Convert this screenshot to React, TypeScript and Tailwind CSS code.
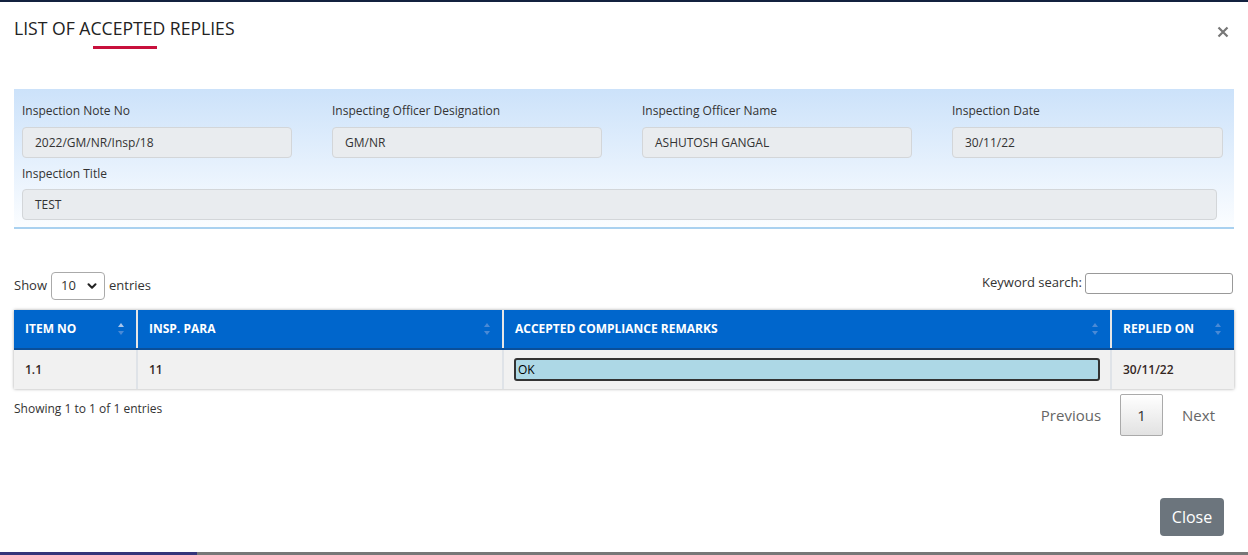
import { ChevronDown } from 'lucide-react';

const fields = [
  { label: 'Inspection Note No', value: '2022/GM/NR/Insp/18' },
  { label: 'Inspecting Officer Designation', value: 'GM/NR' },
  { label: 'Inspecting Officer Name', value: 'ASHUTOSH GANGAL' },
  { label: 'Inspection Date', value: '30/11/22' },
];

function SortIcon({ active }: { active?: boolean }) {
  return (
    <svg width="8" height="14" viewBox="0 0 8 14" className="shrink-0">
      <path d="M4 1 L7 5 L1 5 Z" fill={active ? '#a9c6ec' : '#4a8ad6'} />
      <path d="M4 13 L7 9 L1 9 Z" fill="#4a8ad6" />
    </svg>
  );
}

export default function App() {
  return (
    <div
      className="relative h-[555px] w-[1248px] overflow-hidden border-t-2 border-[#13213f] bg-white text-[#333]"
      style={{ fontFamily: '"Open Sans", "Noto Sans", sans-serif' }}
    >
      <div className="flex items-start justify-between px-[14px] pt-[14px]">
        <div className="flex flex-col">
          <h1 className="text-[17.6px] leading-[24px] text-[#222]">LIST OF ACCEPTED REPLIES</h1>
          <div className="ml-[79px] mt-[6px] h-[3px] w-[64px] bg-[#c8103c]" />
        </div>
        <button className="mr-[5px] mt-[10px]">
          <svg width="12" height="12" viewBox="0 0 12 12">
            <path d="M1.5 1.5 L10.5 10.5 M10.5 1.5 L1.5 10.5" stroke="#777" strokeWidth="2.2" />
          </svg>
        </button>
      </div>

      <div className="mx-[14px] mt-[40px] border-b-2 border-[#a9d1f0] bg-gradient-to-b from-[#cce2fa] to-[#fbfdff] px-[8px] pb-[7px] pt-[13px]">
        <div className="grid grid-cols-[270px_270px_270px_271px] gap-x-[40px]">
          {fields.map((f) => (
            <div key={f.label} className="flex flex-col">
              <label className="text-[12px] leading-[18px] text-[#333]">{f.label}</label>
              <div className="mt-[7px] flex h-[31px] items-center rounded-[4px] border border-[#d3d6d9] bg-[#e9ecef] px-[12px] text-[12px] text-[#333]">
                {f.value}
              </div>
            </div>
          ))}
        </div>
        <div className="mt-[7px] flex flex-col pr-[9px]">
          <label className="text-[12px] leading-[18px] text-[#333]">Inspection Title</label>
          <div className="mt-[6px] flex h-[31px] items-center rounded-[4px] border border-[#d3d6d9] bg-[#e9ecef] px-[12px] text-[12px] text-[#333]">
            TEST
          </div>
        </div>
      </div>

      <div className="mx-[14px] mt-[43px] flex items-center justify-between">
        <div className="flex items-center gap-[4px] text-[13px]">
          <span>Show</span>
          <div className="flex h-[28px] w-[54px] items-center justify-between rounded-[4px] border border-[#aaa] pl-[9px] pr-[5px]">
            <span>10</span>
            <ChevronDown size={14} strokeWidth={3.5} className="text-[#222]" />
          </div>
          <span>entries</span>
        </div>
        <div className="-mt-[6px] mr-[1px] flex items-center gap-[3px] text-[13px]">
          <span>Keyword search:</span>
          <div className="h-[21px] w-[148px] rounded-[3px] border border-[#999]" />
        </div>
      </div>

      <div className="mx-[14px] mt-[10px] shadow-[0_0_3px_rgba(0,0,0,0.35)]">
        <div className="grid grid-cols-[124px_366px_608px_1fr] bg-[#0066cc] text-[12px] font-bold text-white">
          <div className="flex h-[38px] items-center justify-between border-r-2 border-[#e6e6e6] px-[11px]">
            <span>ITEM NO</span>
            <SortIcon active />
          </div>
          <div className="flex h-[38px] items-center justify-between border-r-2 border-[#e6e6e6] px-[11px]">
            <span>INSP. PARA</span>
            <SortIcon />
          </div>
          <div className="flex h-[38px] items-center justify-between border-r-2 border-[#e6e6e6] px-[11px]">
            <span>ACCEPTED COMPLIANCE REMARKS</span>
            <SortIcon />
          </div>
          <div className="flex h-[38px] items-center justify-between px-[11px] pr-[12px]">
            <span>REPLIED ON</span>
            <SortIcon />
          </div>
        </div>
        <div className="grid grid-cols-[124px_366px_608px_1fr] border-t-2 border-[#0a4f9a] bg-[#f1f1f1] text-[12px] font-semibold text-[#33261f]">
          <div className="flex h-[39px] items-center border-r-2 border-[#dfe3e8] px-[11px]">1.1</div>
          <div className="flex h-[39px] items-center border-r-2 border-[#dfe3e8] px-[11px]">11</div>
          <div className="flex h-[39px] items-center border-r-2 border-[#dfe3e8] px-[10px]">
            <div className="flex h-[23px] w-full items-center rounded-[3px] border-2 border-[#333] bg-[#add8e6] px-[2px] text-[12px] font-normal text-black">
              OK
            </div>
          </div>
          <div className="flex h-[39px] items-center px-[11px]">30/11/22</div>
        </div>
      </div>

      <div className="mx-[14px] mt-[5px] flex items-start justify-between">
        <span className="mt-[6px] text-[12px] text-[#333]">Showing 1 to 1 of 1 entries</span>
        <div className="mr-[19px] flex items-center gap-[19px] text-[15px] text-[#666]">
          <span>Previous</span>
          <div className="flex h-[42px] w-[43px] items-center justify-center rounded-[2px] border border-[#aaa] bg-gradient-to-b from-white to-[#e2e2e2] text-[#333]">
            1
          </div>
          <span>Next</span>
        </div>
      </div>

      <button className="absolute right-[24px] top-[496px] h-[38px] w-[64px] rounded-[4px] bg-[#6c757d] text-[16px] text-white">
        Close
      </button>

      <div className="absolute bottom-0 left-0 flex h-[3px] w-full">
        <div className="w-[197px] bg-[#35357a]" />
        <div className="flex-1 bg-[#777]" />
      </div>
    </div>
  );
}
